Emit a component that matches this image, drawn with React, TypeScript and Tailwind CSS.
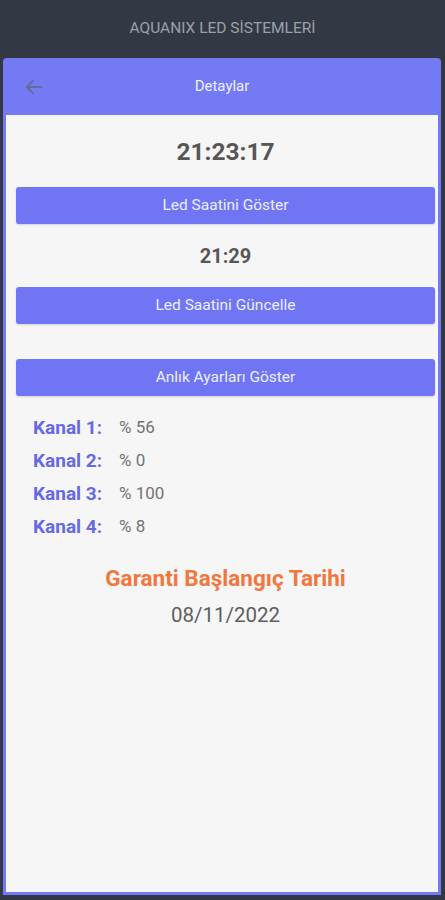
const channels = [
  { label: 'Kanal 1:', value: '% 56' },
  { label: 'Kanal 2:', value: '% 0' },
  { label: 'Kanal 3:', value: '% 100' },
  { label: 'Kanal 4:', value: '% 8' },
];

export default function App() {
  return (
    <div className="flex h-[900px] flex-col bg-[#333944] font-['Roboto','Liberation_Sans',sans-serif]">
      <div className="flex h-[58px] items-center justify-center">
        <span className="text-[15.5px] text-[#9ba1aa]">AQUANIX LED SİSTEMLERİ</span>
      </div>

      <div className="ml-[3px] mr-[4px] mb-[5px] flex flex-1 flex-col rounded-t-[4px] bg-[#7479f4] px-[3px] pb-[3px]">
        <div className="relative flex h-[57px] items-center justify-center">
          <svg className="absolute left-[17px] top-[18px]" width="22" height="22" viewBox="0 0 24 24" fill="none" stroke="#666a9a" strokeWidth="2" strokeLinecap="round" strokeLinejoin="round">
            <path d="M20 12H5" />
            <path d="M11 5l-7 7 7 7" />
          </svg>
          <span className="text-[15px] text-[#eef0ff]">Detaylar</span>
        </div>

        <div className="flex flex-1 flex-col bg-[#f6f6f6] pl-[10px] pr-[3px]">
          <div className="flex h-[72px] items-center justify-center pt-[2px]">
            <span className="text-[24.5px] font-bold text-[#565656]">21:23:17</span>
          </div>
          <Button label="Led Saatini Göster" />
          <div className="flex h-[63px] items-center justify-center">
            <span className="text-[20px] font-bold text-[#575757]">21:29</span>
          </div>
          <Button label="Led Saatini Güncelle" />
          <div className="h-[35px]" />
          <Button label="Anlık Ayarları Göster" />

          <div className="mt-[19px] flex flex-col gap-[7px] pl-[17px]">
            {channels.map((c) => (
              <div key={c.label} className="flex h-[26px] items-center">
                <span className="w-[86px] text-[19px] font-bold text-[#6669e4]">{c.label}</span>
                <span className="text-[17px] text-[#737373]">{c.value}</span>
              </div>
            ))}
          </div>

          <div className="mt-[22px] flex flex-col items-center">
            <span className="text-[22.5px] font-bold text-[#f2773f]">Garanti Başlangıç Tarihi</span>
            <span className="mt-[4px] text-[20.5px] text-[#5e5e5e]">08/11/2022</span>
          </div>
        </div>
      </div>
    </div>
  );
}

function Button({ label }: { label: string }) {
  return (
    <div className="flex h-[37px] items-center justify-center rounded-[3px] bg-[#7076f3] shadow-[0_1px_2px_rgba(0,0,0,0.15)]">
      <span className="text-[15.5px] text-[#eceeff]">{label}</span>
    </div>
  );
}
